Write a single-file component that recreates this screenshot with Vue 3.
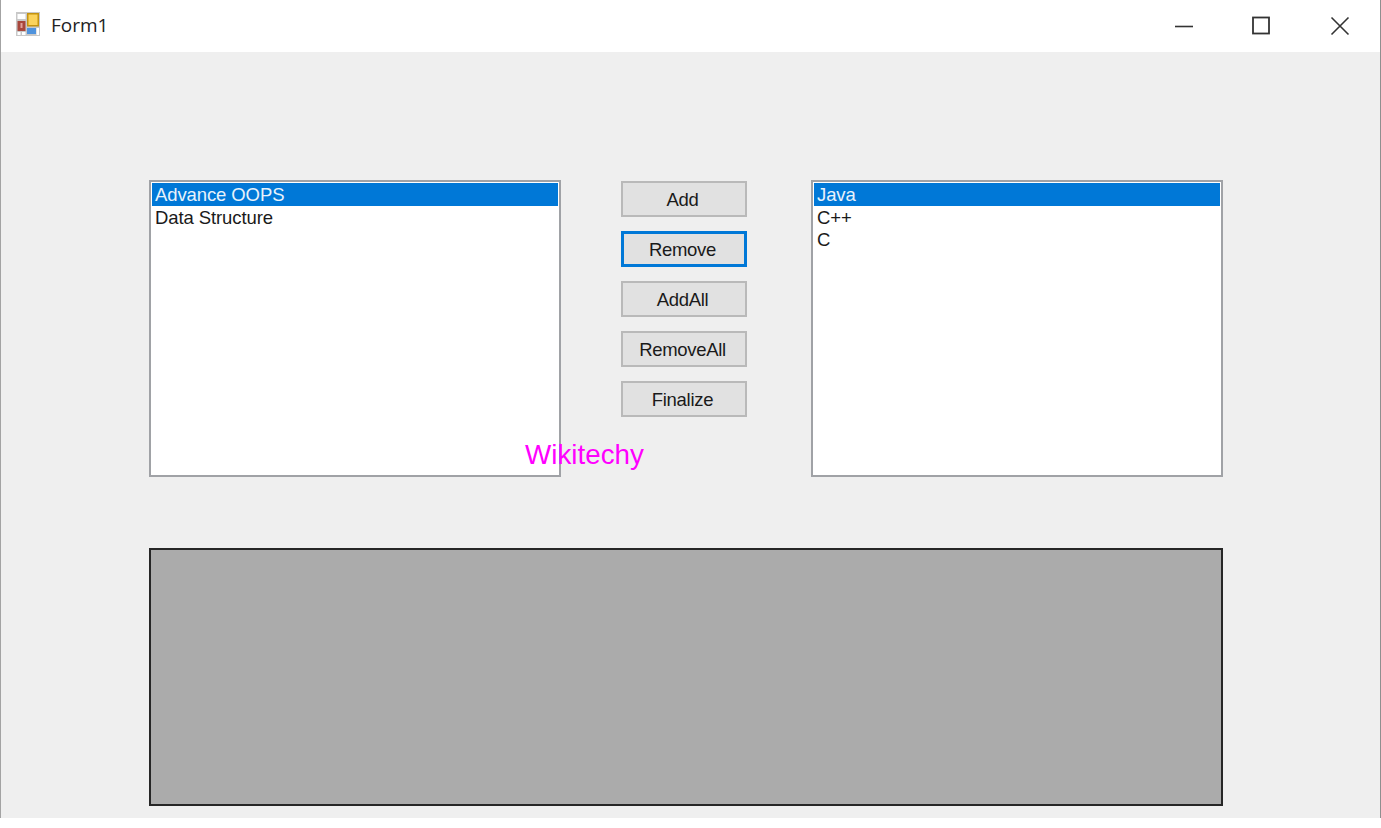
<template>
  <div class="window">
    <div class="titlebar">
      <svg class="app-icon" width="24" height="24" viewBox="0 0 24 24">
        <rect x="0" y="0" width="24" height="24" fill="#c8c8c8" />
        <rect x="1.5" y="2" width="8" height="5" fill="#fff" />
        <rect x="1.5" y="9" width="8" height="10" fill="#a8473c" />
        <rect x="4.5" y="11" width="2" height="5" fill="#e0a099" />
        <rect x="1.5" y="20" width="3" height="3" fill="#fff" />
        <rect x="6" y="20" width="3.5" height="3" fill="#fff" />
        <rect x="11" y="1" width="12" height="13.5" fill="#c4930f" />
        <rect x="12.5" y="2.5" width="9" height="10.5" fill="#fbd35c" />
        <rect x="11" y="16" width="9" height="6" fill="#4f93dd" />
        <rect x="20.5" y="16" width="2.5" height="7" fill="#fff" />
      </svg>
      <span class="title">Form1</span>
      <div class="controls">
        <svg width="20" height="20" viewBox="0 0 20 20"><path d="M1 10.5H19" stroke="#333" stroke-width="1.6" /></svg>
        <svg width="20" height="20" viewBox="0 0 20 20"><rect x="1" y="1.5" width="16" height="16" fill="none" stroke="#333" stroke-width="1.8" /></svg>
        <svg width="20" height="20" viewBox="0 0 20 20"><path d="M1.5 1.5L18.5 18.5M18.5 1.5L1.5 18.5" stroke="#333" stroke-width="1.6" /></svg>
      </div>
    </div>

    <div class="form">
      <div class="top-row">
        <div class="listbox">
          <div
            v-for="(item, i) in leftItems"
            :key="item"
            class="item"
            :class="{ selected: i === 0 }"
          >{{ item }}</div>
        </div>

        <div class="buttons">
          <div
            v-for="btn in buttons"
            :key="btn"
            class="btn"
            :class="{ focused: btn === 'Remove' }"
          >{{ btn }}</div>
        </div>

        <div class="listbox">
          <div
            v-for="(item, i) in rightItems"
            :key="item"
            class="item"
            :class="{ selected: i === 0 }"
          >{{ item }}</div>
        </div>
      </div>

      <div class="panel"></div>
      <span class="watermark">Wikitechy</span>
    </div>
  </div>
</template>

<script setup>
const leftItems = ['Advance OOPS', 'Data Structure']
const rightItems = ['Java', 'C++', 'C']
const buttons = ['Add', 'Remove', 'AddAll', 'RemoveAll', 'Finalize']
</script>

<style>
html, body {
  background: #fff;
}
</style>

<style scoped>
.window {
  width: 1381px;
  height: 818px;
  box-sizing: border-box;
  display: flex;
  flex-direction: column;
  border-left: 1px solid #a3a3a3;
  border-right: 1px solid #8f8f8f;
  font-family: "Liberation Sans", Arial, sans-serif;
  color: #1a1a1a;
}

.titlebar {
  height: 52px;
  flex: none;
  display: flex;
  align-items: center;
  background: #fff;
  padding: 0 0 4px 15px;
  box-sizing: border-box;
}

.app-icon {
  margin-right: 11px;
}

.title {
  font-family: "Open Sans", sans-serif;
  font-size: 19px;
  color: #222;
  margin-top: 2px;
}

.controls {
  margin-left: auto;
  margin-right: 30px;
  display: flex;
  gap: 58px;
  align-items: center;
  margin-top: 3px;
}

.form {
  flex: 1;
  position: relative;
  background: #efefef;
  padding: 128px 0 0 148px;
}

.top-row {
  display: flex;
  align-items: flex-start;
}

.listbox {
  width: 412px;
  height: 297px;
  box-sizing: border-box;
  background: #fff;
  border: 2px solid #a0a2a6;
  padding: 1px;
  font-size: 18.5px;
  letter-spacing: -0.1px;
}

.item {
  height: 22.5px;
  line-height: 23px;
  padding-left: 3px;
  white-space: nowrap;
}

.item.selected {
  background: #0078d7;
  color: #e8f2fb;
}

.buttons {
  width: 126px;
  margin: 1px 64px 0 60px;
  display: flex;
  flex-direction: column;
  gap: 14px;
}

.btn {
  height: 36px;
  box-sizing: border-box;
  display: flex;
  align-items: center;
  justify-content: center;
  background: #e1e1e1;
  border: 2px solid #b9b9b9;
  font-size: 18.5px;
  letter-spacing: -0.3px;
  padding: 1px 3px 0 0;
}

.btn.focused {
  border: 3px solid #0078d7;
}

.panel {
  width: 1074px;
  height: 258px;
  margin-top: 71px;
  box-sizing: border-box;
  background: #ababab;
  border: 2px solid #262626;
}

.watermark {
  position: absolute;
  left: 524px;
  top: 387px;
  font-size: 27.8px;
  line-height: 32px;
  color: #ff00ff;
}
</style>
